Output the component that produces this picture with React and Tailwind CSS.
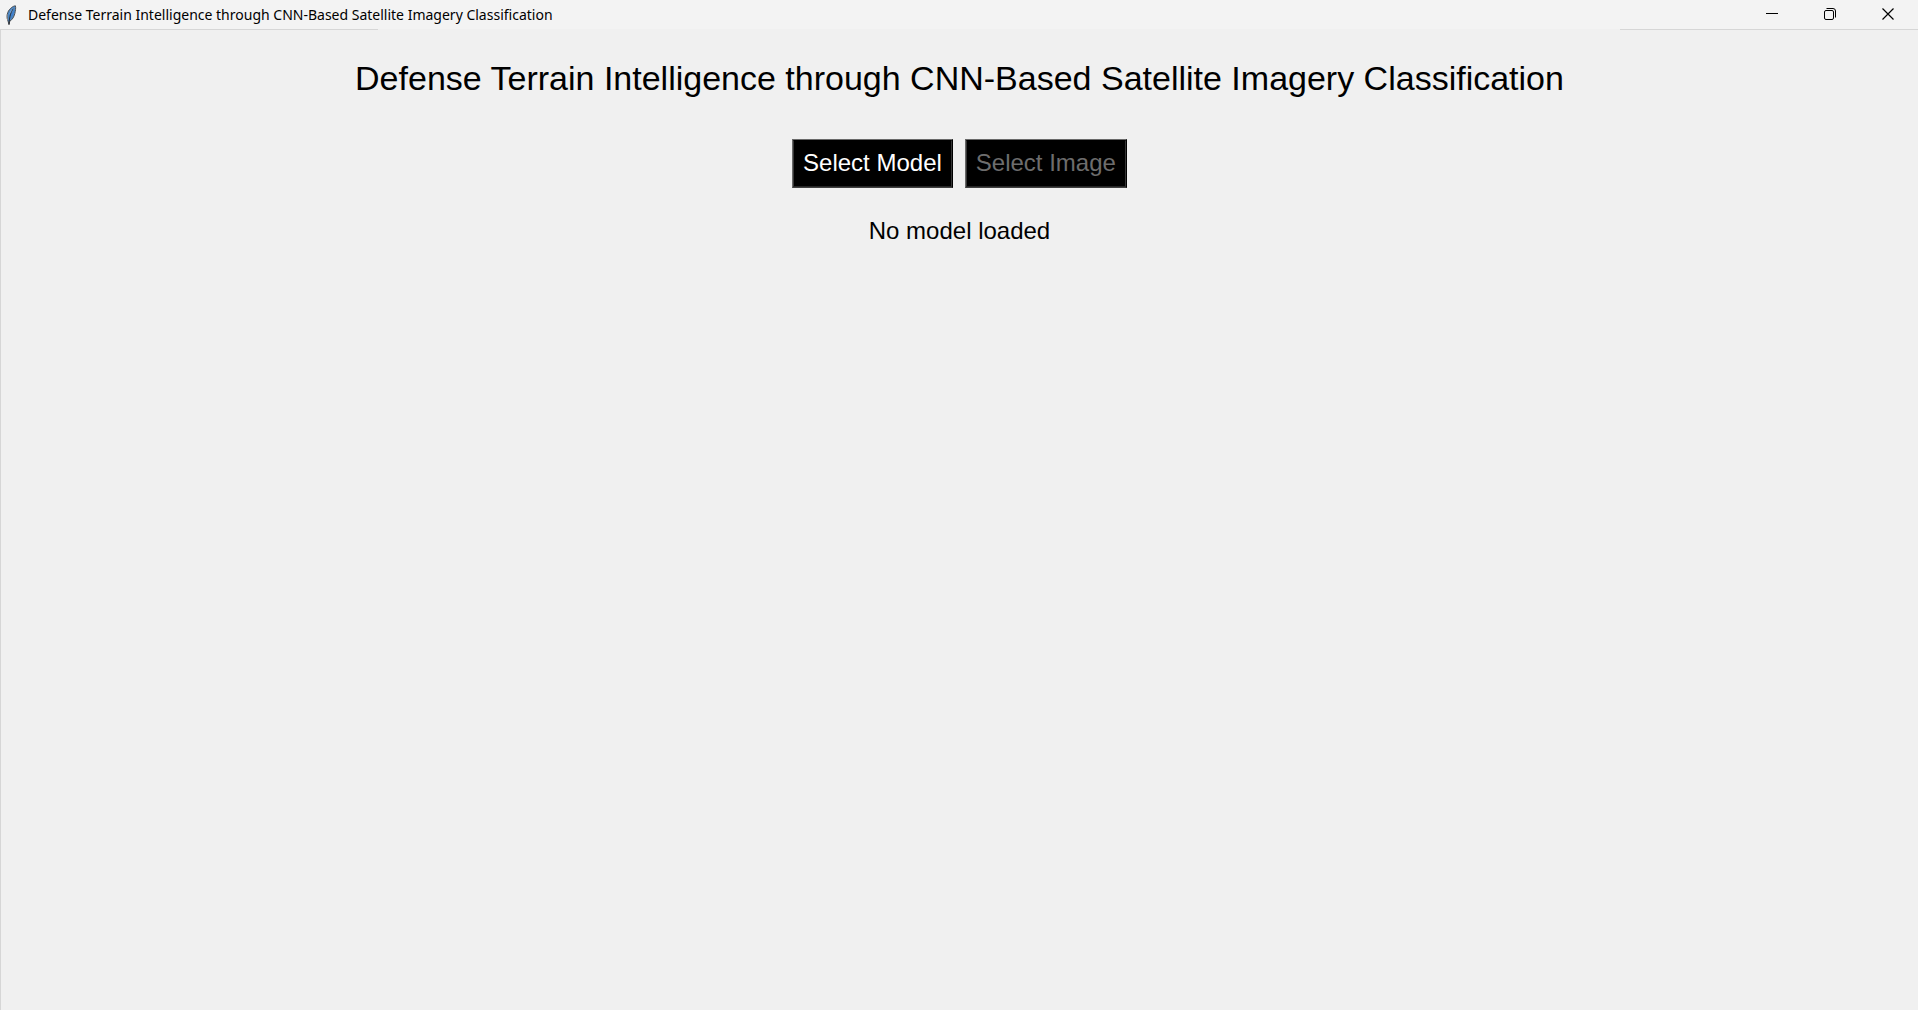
const TITLE =
  'Defense Terrain Intelligence through CNN-Based Satellite Imagery Classification';

function FeatherIcon() {
  return (
    <svg width="12" height="20" viewBox="0 0 12 20" aria-hidden="true">
      <path
        d="M9.4 0.8C7 1 3.4 3.6 1.8 7.4C0.8 10 0.8 13 2 16L3 19.6L3.8 16.2C6.6 14.4 8 11.8 8.8 8.6C9.4 6 10 3 9.4 0.8Z"
        fill="#4a86c4"
        stroke="#4c4f54"
        strokeWidth="1"
      />
      <path d="M8.4 2.4C5.8 3.6 4 6.4 3.2 9.6L5.6 7.6Z" fill="#8bbcf0" />
      <path d="M7.8 4.8L7 9.4L4.6 13L5.2 9Z" fill="#3f7fce" />
      <path d="M7.4 3.6C4.8 7 3.4 11.4 3 19.4" fill="none" stroke="#1d2229" strokeWidth="0.9" />
      <path d="M1.2 9.6C0.8 11.6 1 13.4 1.6 15" fill="none" stroke="#9a9a9a" strokeWidth="0.8" />
    </svg>
  );
}

function CaptionButton({ label, children }) {
  return (
    <button type="button" aria-label={label} className="flex h-full w-[58px] items-center justify-center text-black">
      <svg width="12" height="12" viewBox="0 0 12 12" fill="none" stroke="currentColor" aria-hidden="true">
        {children}
      </svg>
    </button>
  );
}

function TitleBar() {
  return (
    <header className="flex h-[29px] items-center bg-[#f3f3f3]">
      <div className="flex flex-1 items-center gap-2.5 pl-1.5">
        <FeatherIcon />
        <span className="font-['Noto_Sans',sans-serif] text-[14px] leading-5 text-black">{TITLE}</span>
      </div>
      <div className="flex h-full items-start pr-px pb-px">
        <CaptionButton label="Minimize">
          <path d="M0 5.5H12" />
        </CaptionButton>
        <CaptionButton label="Restore">
          <rect x="0.5" y="2.5" width="9" height="9" rx="1.5" />
          <path d="M2.5 0.5H9A2.5 2.5 0 0 1 11.5 3V9.5" />
        </CaptionButton>
        <CaptionButton label="Close">
          <path d="M0.5 0.5L11.5 11.5M11.5 0.5L0.5 11.5" strokeWidth="1.2" />
        </CaptionButton>
      </div>
    </header>
  );
}

function ActionButton({ children, disabled }) {
  return (
    <button
      type="button"
      disabled={disabled}
      className="border border-t-[#696969] border-r-black border-b-[#404040] border-l-[#696969] bg-black text-2xl leading-9 text-white disabled:text-[#6d6d6d]"
    >
      <span className="block border border-t-black border-r-[#363636] border-b-[#262626] border-l-[#363636] px-[9px] pt-1 pb-[5px]">
        {children}
      </span>
    </button>
  );
}

export default function App() {
  return (
    <div className="flex min-h-screen flex-col bg-[#f0f0f0]">
      <TitleBar />
      <div className="flex h-px justify-between" aria-hidden="true">
        <div className="w-[378px] bg-[#d6d6d6]" />
        <div className="w-[298px] bg-[#d6d6d6]" />
      </div>
      <main className="flex flex-1 flex-col items-center border-l border-[#d6d6d6] pt-7 font-['Liberation_Sans',Arial,sans-serif] text-black">
        <h1 className="text-[34px] leading-10">{TITLE}</h1>
        <div className="mt-[41px] flex gap-3">
          <ActionButton>Select Model</ActionButton>
          <ActionButton disabled>Select Image</ActionButton>
        </div>
        <p className="mt-[25px] text-2xl leading-9">No model loaded</p>
      </main>
    </div>
  );
}
